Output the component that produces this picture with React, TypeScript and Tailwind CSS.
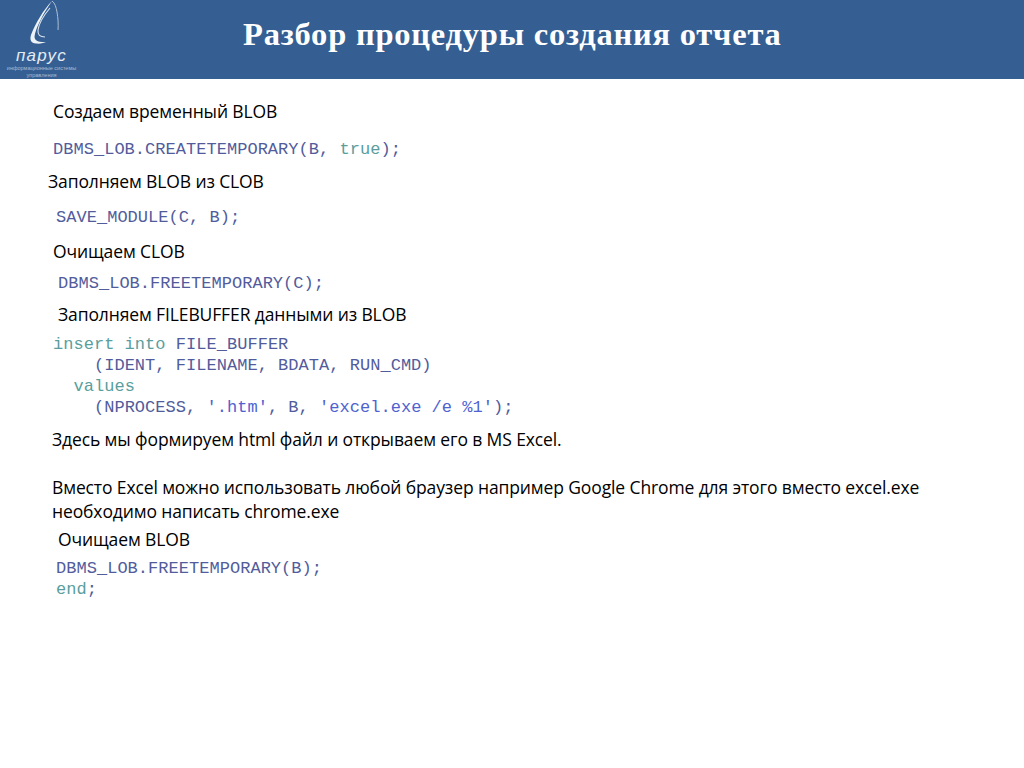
const sans = "font-['Open_Sans','Noto_Sans',sans-serif] text-[17.5px] leading-[24px] text-black tracking-[-0.12px]";
const mono = "font-['Liberation_Mono',monospace] text-[17px] leading-[21px] text-[#525c9c] tracking-[0.03px] whitespace-pre";
const kw = 'text-[#5a9e9e]';
const str = 'text-[#4f62d0]';

const Logo = () => (
  <div className="w-[80px] h-[79px] flex flex-col items-center shrink-0">
    <svg width="80" height="45" viewBox="0 0 80 45" className="shrink-0">
      {/* sail */}
      <path d="M52 1 C44 9 35 24 31 35 C29.500 40 31 43 36 43.500 C40 44 44 43 46 42 C40 42.500 35 41.500 34.500 37 C35 29 44 12 52 1 Z" fill="#eef3f8" />
      <path d="M52 1 C55 3 56 7 57 12 C58 18 58.500 24 58 30" fill="none" stroke="#aebfd4" strokeWidth="1" />
      <path d="M50 8 C44 15 39 23 38 30 C37.500 35 40 37 45 37" fill="none" stroke="#dbe4ee" strokeWidth="1.1" />
    </svg>
    <div className="font-['Liberation_Sans',sans-serif] italic text-[17px] leading-[16px] text-[#e4ebf3] tracking-[1.3px] mt-[3px] ml-[3px]">парус</div>
    <div className="font-['Liberation_Sans',sans-serif] text-[5.5px] leading-[7px] text-[#a9bbd2] text-center whitespace-nowrap mt-[1px] ml-[3px]">
      <div>информационные системы</div>
      <div>управления</div>
    </div>
  </div>
);

export default function App() {
  return (
    <div className="w-[1024px] h-[768px] bg-white overflow-hidden">
      <header className="h-[79px] bg-[#355f93] flex">
        <Logo />
        <h1 className="font-['Liberation_Serif',serif] font-bold text-[32.5px] leading-[69px] text-white tracking-[0.78px] ml-[163px] whitespace-nowrap">
          Разбор процедуры создания отчета
        </h1>
      </header>
      <main className="flex flex-col">
        <p className={`${sans} ml-[53px] mt-[20px]`}>Создаем временный BLOB</p>
        <pre className={`${mono} ml-[53px] mt-[16px]`}>DBMS_LOB.CREATETEMPORARY(B, <span className={kw}>true</span>);</pre>
        <p className={`${sans} ml-[48px] mt-[9px] mb-[1px]`}>Заполняем BLOB из CLOB</p>
        <pre className={`${mono} ml-[56px] mt-[13px]`}>SAVE_MODULE(C, B);</pre>
        <p className={`${sans} ml-[53px] mt-[11px] mb-[1px]`}>Очищаем CLOB</p>
        <pre className={`${mono} ml-[58px] mt-[9px]`}>DBMS_LOB.FREETEMPORARY(C);</pre>
        <p className={`${sans} ml-[58px] mt-[8px] mb-[1px]`}>Заполняем FILEBUFFER данными из BLOB</p>
        <pre className={`${mono} ml-[53px] mt-[7px]`}>
          <span className={kw}>insert into</span> FILE_BUFFER{'\n'}
          {'    '}(IDENT, FILENAME, BDATA, RUN_CMD){'\n'}
          {'  '}<span className={kw}>values</span>{'\n'}
          {'    '}(NPROCESS, <span className={str}>'.htm'</span>, B, <span className={str}>'excel.exe /e %1'</span>);
        </pre>
        <div className={`${sans} ml-[52px] mt-[9px]`}>
          <p>Здесь мы формируем html файл и открываем его в MS Excel.</p>
          <p className="mt-[24px]">Вместо Excel можно использовать любой браузер например Google Chrome для этого вместо excel.exe</p>
          <p>необходимо написать chrome.exe</p>
        </div>
        <p className={`${sans} ml-[58px] mt-[4px] mb-[1px]`}>Очищаем BLOB</p>
        <pre className={`${mono} ml-[56px] mt-[6px]`}>
          DBMS_LOB.FREETEMPORARY(B);{'\n'}
          <span className={kw}>end</span>;
        </pre>
      </main>
    </div>
  );
}
